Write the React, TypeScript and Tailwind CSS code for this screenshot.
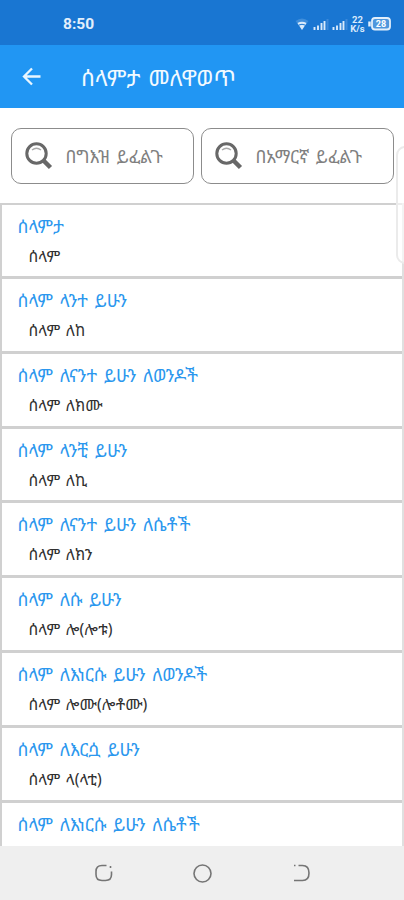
import React from "react";

interface Phrase {
  amharic: string;
  geez?: string;
}

const phrases: Phrase[] = [
  { amharic: "ሰላምታ", geez: "ሰላም" },
  { amharic: "ሰላም ላንተ ይሁን", geez: "ሰላም ለከ" },
  { amharic: "ሰላም ለናንተ ይሁን ለወንዶች", geez: "ሰላም ለክሙ" },
  { amharic: "ሰላም ላንቺ ይሁን", geez: "ሰላም ለኪ" },
  { amharic: "ሰላም ለናንተ ይሁን ለሴቶች", geez: "ሰላም ለክን" },
  { amharic: "ሰላም ለሱ ይሁን", geez: "ሰላም ሎ(ሎቱ)" },
  { amharic: "ሰላም ለእነርሱ ይሁን ለወንዶች", geez: "ሰላም ሎሙ(ሎቶሙ)" },
  { amharic: "ሰላም ለእርሷ ይሁን", geez: "ሰላም ላ(ላቲ)" },
  { amharic: "ሰላም ለእነርሱ ይሁን ለሴቶች" },
];

export default function App() {
  return (
    <div className="relative flex h-[900px] w-[404px] flex-col overflow-hidden bg-white font-['Noto_Sans_Ethiopic','Noto_Sans',sans-serif]">
      <StatusBar />
      <header className="flex h-[63px] shrink-0 items-center bg-[#2196f3] pl-[22px] text-[#f2faff]">
        <svg width="20" height="20" viewBox="0 0 20 20" fill="none" stroke="#e9f6ff" strokeWidth="2.3">
          <path d="M18.500 9.500H2M10 1.500l-8 8 8 8" />
        </svg>
        <h1 className="ml-[39px] mt-0.5 whitespace-nowrap text-[22.6px] leading-[30px] [word-spacing:2px]">ሰላምታ መለዋወጥ</h1>
      </header>

      <div className="flex h-[95px] shrink-0 gap-[7px] pl-[11px] pt-[20px]">
        <SearchBox label="በግእዝ ይፈልጉ" className="w-[183px]" />
        <SearchBox label="በአማርኛ ይፈልጉ" className="w-[193px]" />
      </div>

      <main className="min-h-0 flex-1 overflow-hidden border-x-2 border-[#d0d0d0] border-r-[#e0e0e0]">
        {phrases.map((phrase) => (
          <PhraseRow key={phrase.amharic} phrase={phrase} />
        ))}
      </main>

      <NavBar />

      {/* edge panel handle */}
      <div className="absolute left-[396px] top-[146px] h-[118px] w-5 rounded-[9px] border-2 border-[#ebebeb] bg-white/60" />
    </div>
  );
}

// ----------------- Status bar -----------------
const StatusBar = () => (
  <div className="flex h-[45px] shrink-0 items-center bg-[#1976d2] pl-[63px] pt-[2px] font-['Roboto',sans-serif] text-[#e3effb]">
    <span className="w-[232px] text-[15.5px] font-bold leading-5">8:50</span>
    <svg width="98" height="20" viewBox="295 13 98 20" fill="none">
      <path d="M295.500 20q6.500-5 13 0l-6.500 9z" fill="#3f8edb" />
      <path d="M297.500 22q4.500-2.500 9 0l-4.500 7z" fill="#d9eafb" />
      <path d="M299 24q3-1.500 6 0" stroke="#1976d2" />
      <path d="M314.500 29v-3M318 29v-4.500M321.500 29v-7M324.500 29v-9" stroke="#d9eafb" strokeWidth="1.900" />
      <path d="M327.500 29V18" stroke="#3b89da" strokeWidth="2" />
      <path d="M333.500 29v-3M337 29v-4.500M340.500 29v-7M343.500 29v-9" stroke="#d9eafb" strokeWidth="1.900" />
      <path d="M346.500 29V18" stroke="#3b89da" strokeWidth="2" />
      <text x="357.500" y="21.500" textAnchor="middle" fontSize="9.500" fontWeight="700" fill="#d9eafb">22</text>
      <text x="357.500" y="31" textAnchor="middle" fontSize="9.500" fontWeight="700" fill="#d9eafb">K/s</text>
      <rect x="372" y="17" width="18" height="11.500" rx="3" fill="#4f97dd" stroke="#e3effb" strokeWidth="1.800" />
      <path d="M369.500 20.500v5" stroke="#e3effb" strokeWidth="2.500" />
      <text x="381" y="26.200" textAnchor="middle" fontSize="9" fontWeight="700" fill="#fff">28</text>
    </svg>
  </div>
);

// ----------------- Search box -----------------
const SearchBox = ({ label, className }: { label: string; className: string }) => (
  <div className={`flex h-[56px] items-center rounded-[10px] border-[1.5px] border-[#8c8c8c] pl-3 ${className}`}>
    <svg width="30" height="30" viewBox="0 0 30 30" fill="none" stroke="#686868">
      <circle cx="12.500" cy="12.500" r="9.700" strokeWidth="3" />
      <path d="m19 19 7.500 7.500" strokeWidth="4.500" />
      <path d="M8 9q4.500-3.500 9 0" stroke="#aaa" strokeWidth="1.400" />
    </svg>
    <span className="ml-[11.5px] whitespace-nowrap text-[17.6px] leading-6 text-[#808080] [word-spacing:2px]">{label}</span>
  </div>
);

// ----------------- Phrase row -----------------
const PhraseRow = ({ phrase }: { phrase: Phrase }) => (
  <div className="h-[74.8px] whitespace-nowrap border-t-[3px] border-[#d0d0d0] pl-[15.5px] pt-2 first:h-[73px] first:border-t-2 first:pt-[7.5px]">
    <p className="text-[17.7px] leading-[26px] text-[#2b97ee] [word-spacing:2px]">{phrase.amharic}</p>
    {phrase.geez && (
      <p className="ml-[11px] mt-[5px] text-[15.8px] leading-6 text-[#303030] [word-spacing:1.5px]">{phrase.geez}</p>
    )}
  </div>
);

// ----------------- Navigation bar -----------------
const NavBar = () => (
  <nav className="flex h-[54px] shrink-0 items-center justify-between bg-[#efefef] pl-[94px] pr-[92px]">
    <svg width="20" height="20" viewBox="0 0 20 20" fill="none" stroke="#757575" strokeWidth="1.600">
      <path d="M12.500 2.500H8q-6 0-6 6v3q0 6 6 6h3.500q6 0 6-6V8.500M16.500 3v2" />
    </svg>
    <svg width="20" height="20" viewBox="0 0 20 20" fill="none" stroke="#757575" strokeWidth="1.600">
      <circle cx="9.500" cy="10.500" r="8.500" />
    </svg>
    <svg width="20" height="20" viewBox="0 0 20 20" fill="none" stroke="#757575" strokeWidth="1.600">
      <path d="M2 2.500h1.500M6.500 2.500h4q6.500 0 6.500 7.500t-6.500 7.500H2" />
    </svg>
  </nav>
);
